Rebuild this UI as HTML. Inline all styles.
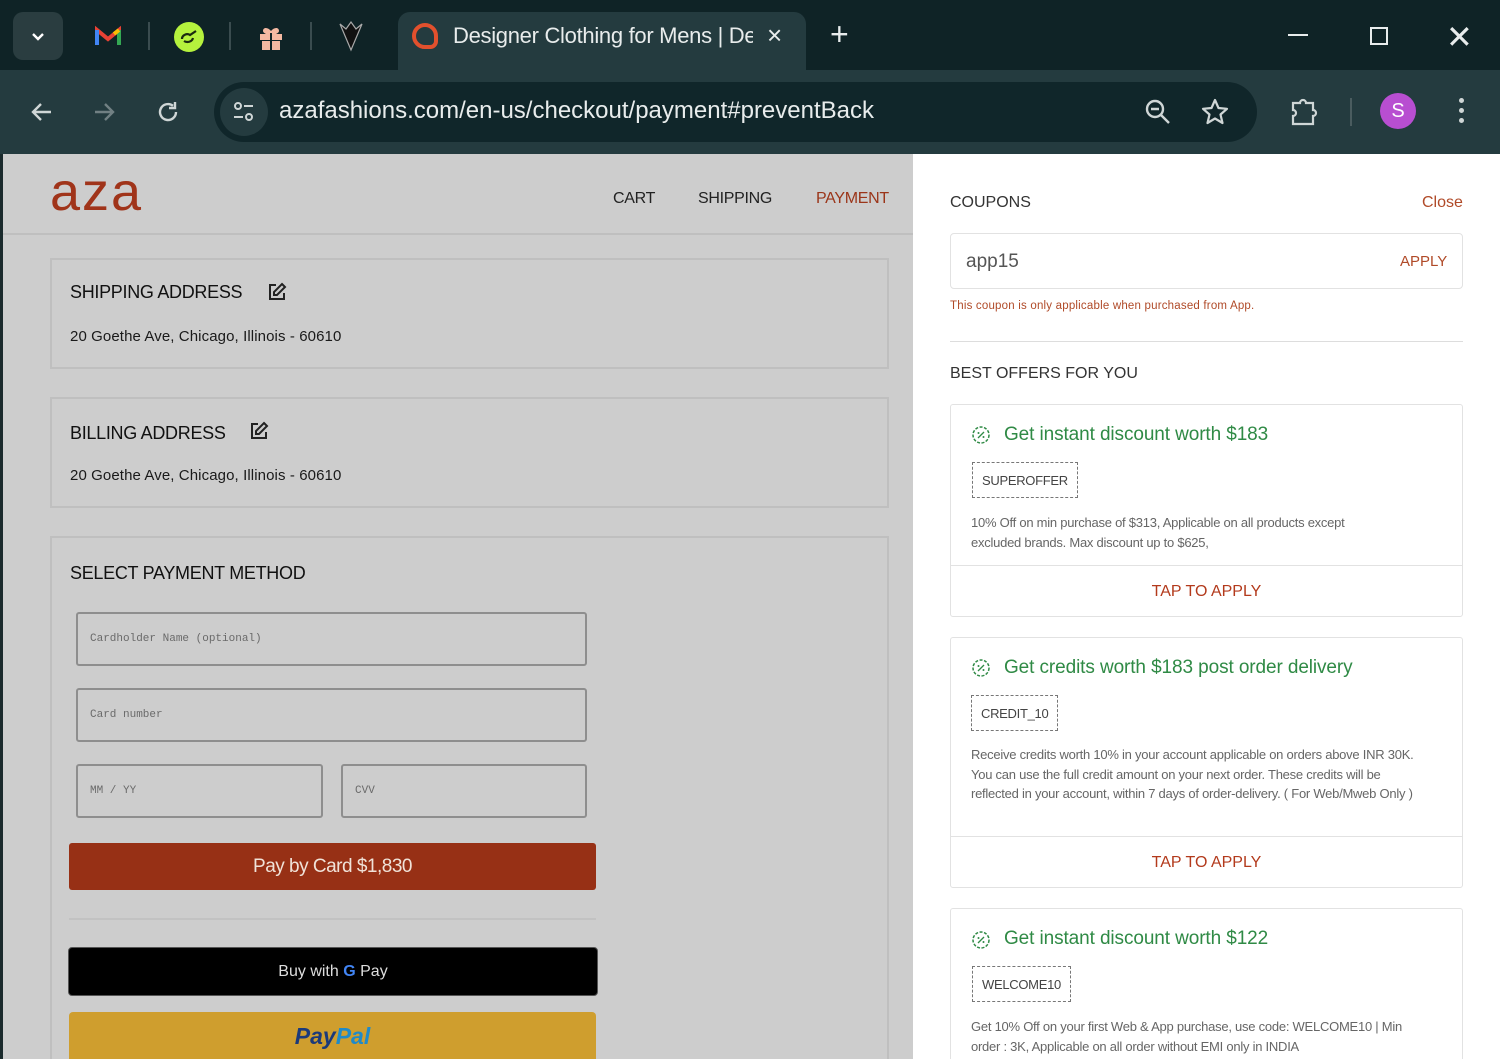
<!DOCTYPE html>
<html><head><meta charset="utf-8">
<style>
*{margin:0;padding:0;box-sizing:border-box}
html,body{width:1500px;height:1059px;overflow:hidden}
body{position:relative;font-family:"Liberation Sans",sans-serif;background:#cdcdcd}
#w{position:absolute;left:0;top:0;width:1500px;height:1059px;overflow:hidden}
.a{position:absolute}
.tb{left:0;top:0;width:1500px;height:72px;background:#0f2326}
.tool{left:0;top:70px;width:1500px;height:84px;background:#243b3f}
.page{left:0;top:154px;width:913px;height:905px;background:#cdcdcd;border-left:3px solid #1a2a2c}
.right{left:913px;top:154px;width:587px;height:905px;background:#fff}
.box{border:2px solid #bfbfbf;background:#cdcdcd}
.h{font-size:18px;color:#111;letter-spacing:-.3px}
.addr{font-size:15px;color:#1a1a1a;letter-spacing:.1px}
.inp{border:2px solid #8e8e8e;border-radius:3px;background:#cdcdcd;font-family:"Liberation Mono",monospace;font-size:11px;color:#6a6a6a;padding-left:12px;display:flex;align-items:center}
.card{border:1px solid #e2e2e2;border-radius:3px;background:#fff}
.ot{font-size:19px;color:#2f8a45;letter-spacing:-.1px}
.code{border:1.5px dashed #777;font-size:13px;color:#444;padding:0 9px;height:36px;display:flex;align-items:center;letter-spacing:-.3px}
.desc{font-size:13px;color:#666;line-height:19.5px;letter-spacing:-.25px}
.tap{font-size:16px;color:#b33a1c;text-align:center}
.ic{width:20px;height:20px}
</style></head><body><div id="w">

<div class="a tb"></div>
<div class="a" style="left:13px;top:12px;width:50px;height:48px;background:#2a3d40;border-radius:10px"></div>
<svg class="a" style="left:28px;top:27px" width="20" height="20" viewBox="0 0 20 20"><path d="M5 7l5 5 5-5" stroke="#fff" stroke-width="2.4" fill="none"/></svg>
<svg class="a" style="left:94px;top:25px" width="28" height="22" viewBox="0 0 28 22"><path d="M3 20V5l11 9 11-9v15" fill="none" stroke="#e94235" stroke-width="4"/><path d="M3 20V5" stroke="#4285f4" stroke-width="4"/><path d="M25 20V5" stroke="#34a853" stroke-width="4"/><path d="M20 9l5-4" stroke="#fbbc04" stroke-width="4"/></svg>
<div class="a" style="left:148px;top:22px;width:2px;height:28px;background:#3a4c4f"></div>
<div class="a" style="left:174px;top:22px;width:30px;height:30px;border-radius:50%;background:#b5f23d"></div>
<svg class="a" style="left:178px;top:27px" width="22" height="20" viewBox="0 0 22 20"><path d="M4 12c0-4 5-6 8-4l6-4M6 14c3 2 8 1 9-3" stroke="#1a2a10" stroke-width="2.2" fill="none"/></svg>
<div class="a" style="left:229px;top:22px;width:2px;height:28px;background:#3a4c4f"></div>
<svg class="a" style="left:257px;top:21px" width="28" height="30" viewBox="0 0 28 30"><path d="M14 10c-3-4-8-4-8 0 0 2 4 4 8 4 4 0 8-2 8-4 0-4-5-4-8 0z" fill="#f4b9a2"/><rect x="3" y="13" width="22" height="6" fill="#f4b9a2"/><rect x="5" y="20" width="18" height="9" fill="#f4b9a2"/><rect x="13" y="12" width="2" height="17" fill="#0f2326"/></svg>
<div class="a" style="left:310px;top:22px;width:2px;height:28px;background:#3a4c4f"></div>
<svg class="a" style="left:338px;top:20px" width="26" height="32" viewBox="0 0 26 32"><path d="M2 4l11 26L24 4l-6 5-5-7-5 7z" fill="#111" stroke="#aaa" stroke-width="1.2"/></svg>
<div class="a" style="left:398px;top:12px;width:408px;height:60px;background:#243b3f;border-radius:12px 12px 0 0"></div>
<div class="a" style="left:412px;top:23px;width:26px;height:26px;border:4px solid #e2502d;border-radius:50% 50% 30% 50%"></div>
<div class="a" style="left:453px;top:23px;font-size:22px;color:#e8ecec;letter-spacing:-.3px;white-space:nowrap;width:300px;overflow:hidden">Designer Clothing for Mens | De</div>
<div class="a" style="left:767px;top:20px;font-size:26px;color:#e8ecec">×</div>
<div class="a" style="left:830px;top:16px;font-size:32px;color:#e8ecec">+</div>
<div class="a" style="left:1288px;top:34px;width:20px;height:2px;background:#e8ecec"></div>
<div class="a" style="left:1370px;top:27px;width:18px;height:18px;border:2px solid #e8ecec"></div>
<div class="a" style="left:1446px;top:18px;font-size:32px;color:#e8ecec;font-weight:300">✕</div>

<div class="a tool"></div>
<svg class="a" style="left:28px;top:98px" width="28" height="28" viewBox="0 0 28 28"><path d="M23 14H6M13 6l-8 8 8 8" stroke="#cfd6d6" stroke-width="2.4" fill="none"/></svg>
<svg class="a" style="left:90px;top:98px" width="28" height="28" viewBox="0 0 28 28"><path d="M5 14h17M15 6l8 8-8 8" stroke="#718083" stroke-width="2.4" fill="none"/></svg>
<svg class="a" style="left:154px;top:98px" width="28" height="28" viewBox="0 0 28 28"><path d="M22 14a8 8 0 1 1-3-6.2" stroke="#cfd6d6" stroke-width="2.4" fill="none"/><path d="M21 4v6h-6" stroke="#cfd6d6" stroke-width="2.4" fill="none"/></svg>
<div class="a" style="left:214px;top:82px;width:1043px;height:60px;background:#10262a;border-radius:30px"></div>
<div class="a" style="left:220px;top:88px;width:48px;height:48px;background:#243b3f;border-radius:50%"></div>
<svg class="a" style="left:230px;top:98px" width="28" height="28" viewBox="0 0 28 28"><circle cx="8" cy="8" r="3" stroke="#cfd6d6" stroke-width="2" fill="none"/><path d="M14 8h9M4 19h9" stroke="#cfd6d6" stroke-width="2"/><circle cx="19" cy="19" r="3" stroke="#cfd6d6" stroke-width="2" fill="none"/></svg>
<div class="a" style="left:279px;top:97px;font-size:24px;color:#e8ecec;letter-spacing:0;white-space:nowrap">azafashions.com/en-us/checkout/payment#preventBack</div>
<svg class="a" style="left:1143px;top:97px" width="30" height="30" viewBox="0 0 30 30"><circle cx="12" cy="12" r="8" stroke="#cfd6d6" stroke-width="2.4" fill="none"/><path d="M8 12h8M18 18l8 8" stroke="#cfd6d6" stroke-width="2.4"/></svg>
<svg class="a" style="left:1200px;top:97px" width="30" height="30" viewBox="0 0 30 30"><path d="M15 3l3.5 8 8.5.8-6.5 5.7 2 8.5-7.5-4.5-7.5 4.5 2-8.5L3 11.8l8.5-.8z" stroke="#cfd6d6" stroke-width="2.2" fill="none" stroke-linejoin="round"/></svg>
<svg class="a" style="left:1288px;top:95px" width="34" height="32" viewBox="0 0 34 32"><path d="M5 8h7a3 3 0 0 1 6 0h7v7a3 3 0 0 1 0 6v8H5v-8a3 3 0 0 0 0-6z" stroke="#cfd6d6" stroke-width="2.2" fill="none"/></svg>
<div class="a" style="left:1350px;top:98px;width:2px;height:28px;background:#4a5c5f"></div>
<div class="a" style="left:1380px;top:93px;width:36px;height:36px;border-radius:50%;background:#b84ed1;color:#fff;font-size:20px;text-align:center;line-height:36px">S</div>
<div class="a" style="left:1459px;top:98px;width:5px;height:5px;border-radius:50%;background:#cfd6d6;box-shadow:0 10px 0 #cfd6d6,0 20px 0 #cfd6d6"></div>

<div class="a page"></div>
<div class="a" style="left:50px;top:165px;font-size:54px;color:#a0341a;letter-spacing:2px;line-height:54px">aza</div>
<div class="a" style="left:613px;top:190px;font-size:16px;color:#222;letter-spacing:-.3px">CART</div>
<div class="a" style="left:698px;top:190px;font-size:16px;color:#222;letter-spacing:-.3px">SHIPPING</div>
<div class="a" style="left:816px;top:190px;font-size:16px;color:#9b3519;letter-spacing:-.3px">PAYMENT</div>
<div class="a" style="left:3px;top:233px;width:910px;height:2px;background:#bfbfbf"></div>

<div class="a box" style="left:50px;top:258px;width:839px;height:111px"></div>
<div class="a h" style="left:70px;top:282px">SHIPPING ADDRESS</div>
<svg class="a ic" style="left:267px;top:282px" viewBox="0 0 20 20"><path d="M9 3H3v14h14v-6" stroke="#222" stroke-width="2" fill="none"/><path d="M15 2l3 3-8 8H7v-3z" stroke="#222" stroke-width="2" fill="none"/></svg>
<div class="a addr" style="left:70px;top:328px">20 Goethe Ave, Chicago, Illinois - 60610</div>

<div class="a box" style="left:50px;top:397px;width:839px;height:111px"></div>
<div class="a h" style="left:70px;top:423px">BILLING ADDRESS</div>
<svg class="a ic" style="left:249px;top:421px" viewBox="0 0 20 20"><path d="M9 3H3v14h14v-6" stroke="#222" stroke-width="2" fill="none"/><path d="M15 2l3 3-8 8H7v-3z" stroke="#222" stroke-width="2" fill="none"/></svg>
<div class="a addr" style="left:70px;top:467px">20 Goethe Ave, Chicago, Illinois - 60610</div>

<div class="a box" style="left:50px;top:536px;width:839px;height:540px"></div>
<div class="a h" style="left:70px;top:563px">SELECT PAYMENT METHOD</div>
<div class="a inp" style="left:76px;top:612px;width:511px;height:54px">Cardholder Name (optional)</div>
<div class="a inp" style="left:76px;top:688px;width:511px;height:54px">Card number</div>
<div class="a inp" style="left:76px;top:764px;width:247px;height:54px">MM / YY</div>
<div class="a inp" style="left:341px;top:764px;width:246px;height:54px">CVV</div>
<div class="a" style="left:69px;top:843px;width:527px;height:47px;background:#973015;border-radius:3px;color:#f0e2d8;font-size:19px;text-align:center;line-height:47px;letter-spacing:-.5px">Pay by Card $1,830</div>
<div class="a" style="left:69px;top:918px;width:527px;height:2px;background:#c2c2c2"></div>
<div class="a" style="left:68px;top:947px;width:530px;height:49px;background:#000;border-radius:4px;border:1px solid #555;color:#ddd;font-size:16px;text-align:center;line-height:47px">Buy with <b style="color:#4285f4;font-weight:700">G</b> Pay</div>
<div class="a" style="left:69px;top:1012px;width:527px;height:60px;background:#cf9e2e;border-radius:4px;text-align:center;padding-top:11px;font-size:23px;font-weight:700;font-style:italic"><span style="color:#1b3a7a">Pay</span><span style="color:#1f8ac9">Pal</span></div>

<div class="a right"></div>
<div class="a" style="left:950px;top:194px;font-size:16px;color:#333">COUPONS</div>
<div class="a" style="left:1422px;top:194px;font-size:16px;color:#b04a28">Close</div>
<div class="a card" style="left:950px;top:233px;width:513px;height:56px;border-radius:4px"></div>
<div class="a" style="left:966px;top:251px;font-size:19px;color:#555">app15</div>
<div class="a" style="left:1400px;top:253px;font-size:15px;color:#b04a28">APPLY</div>
<div class="a" style="left:950px;top:300px;font-size:11.5px;color:#b04a28;letter-spacing:.2px">This coupon is only applicable when purchased from App.</div>
<div class="a" style="left:950px;top:341px;width:513px;height:1px;background:#ddd"></div>
<div class="a" style="left:950px;top:365px;font-size:16px;color:#333">BEST OFFERS FOR YOU</div>

<div class="a card" style="left:950px;top:404px;width:513px;height:213px"></div>
<svg class="a ic" style="left:971px;top:425px" viewBox="0 0 20 20"><circle cx="10" cy="10" r="8" stroke="#2f8a45" stroke-width="1.5" fill="none" stroke-dasharray="3 1.5"/><path d="M7 13l6-6" stroke="#2f8a45" stroke-width="1.3"/><circle cx="7.5" cy="8" r="1" fill="#2f8a45"/><circle cx="12.5" cy="12" r="1" fill="#2f8a45"/></svg>
<div class="a ot" style="left:1004px;top:424px">Get instant discount worth $183</div>
<div class="a code" style="left:972px;top:462px">SUPEROFFER</div>
<div class="a desc" style="left:971px;top:513px;width:425px">10% Off on min purchase of $313, Applicable on all products except excluded brands. Max discount up to $625,</div>
<div class="a" style="left:951px;top:565px;width:511px;height:1px;background:#e2e2e2"></div>
<div class="a tap" style="left:951px;top:583px;width:511px">TAP TO APPLY</div>

<div class="a card" style="left:950px;top:637px;width:513px;height:251px"></div>
<svg class="a ic" style="left:971px;top:658px" viewBox="0 0 20 20"><circle cx="10" cy="10" r="8" stroke="#2f8a45" stroke-width="1.5" fill="none" stroke-dasharray="3 1.5"/><path d="M7 13l6-6" stroke="#2f8a45" stroke-width="1.3"/><circle cx="7.5" cy="8" r="1" fill="#2f8a45"/><circle cx="12.5" cy="12" r="1" fill="#2f8a45"/></svg>
<div class="a ot" style="left:1004px;top:657px">Get credits worth $183 post order delivery</div>
<div class="a code" style="left:971px;top:695px">CREDIT_10</div>
<div class="a desc" style="left:971px;top:745px;width:450px">Receive credits worth 10% in your account applicable on orders above INR 30K. You can use the full credit amount on your next order. These credits will be reflected in your account, within 7 days of order-delivery. ( For Web/Mweb Only )</div>
<div class="a" style="left:951px;top:836px;width:511px;height:1px;background:#e2e2e2"></div>
<div class="a tap" style="left:951px;top:854px;width:511px">TAP TO APPLY</div>

<div class="a card" style="left:950px;top:908px;width:513px;height:170px"></div>
<svg class="a ic" style="left:971px;top:930px" viewBox="0 0 20 20"><circle cx="10" cy="10" r="8" stroke="#2f8a45" stroke-width="1.5" fill="none" stroke-dasharray="3 1.5"/><path d="M7 13l6-6" stroke="#2f8a45" stroke-width="1.3"/><circle cx="7.5" cy="8" r="1" fill="#2f8a45"/><circle cx="12.5" cy="12" r="1" fill="#2f8a45"/></svg>
<div class="a ot" style="left:1004px;top:928px">Get instant discount worth $122</div>
<div class="a code" style="left:972px;top:966px">WELCOME10</div>
<div class="a desc" style="left:971px;top:1017px;width:450px">Get 10% Off on your first Web &amp; App purchase, use code: WELCOME10 | Min order : 3K, Applicable on all order without EMI only in INDIA</div>
</div></body></html>
